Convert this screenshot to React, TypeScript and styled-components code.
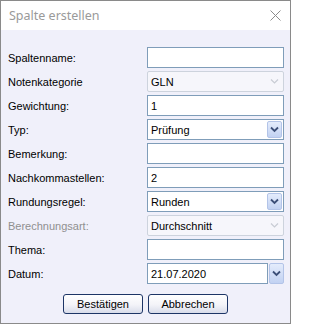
import styled, { createGlobalStyle } from 'styled-components';

const GlobalStyle = createGlobalStyle`
    html, body {
        margin: 0;
        padding: 0;
        background: #ffffff;
    }
    body {
        font-family: "Liberation Sans", Arial, sans-serif;
    }
`;

const Window = styled.div`
    width: 291px;
    height: 324px;
    box-sizing: border-box;
    border: 1px solid #8a8a8a;
    background: #f0f0fa;
    display: flex;
    flex-direction: column;
`;

const TitleBar = styled.div`
    height: 29px;
    flex: none;
    background: #ffffff;
    display: flex;
    align-items: center;
    justify-content: space-between;
    padding: 0 9px 0 8px;
    font-family: "Noto Sans", "Open Sans", sans-serif;
    font-size: 12.5px;
    color: #9a9a9a;
`;

const CloseIcon = styled.svg`
    width: 11px;
    height: 11px;
    display: block;
`;

const Form = styled.div`
    display: grid;
    grid-template-columns: 139px 137px;
    grid-auto-rows: 21px;
    row-gap: 3px;
    align-items: center;
    padding: 17px 6px 0 7px;
`;

const Label = styled.label<{ $disabled?: boolean }>`
    font-size: 11px;
    color: ${({ $disabled }) => ($disabled ? '#8f8f8f' : '#000000')};
`;

const TextBox = styled.input`
    box-sizing: border-box;
    width: 100%;
    height: 21px;
    margin: 0;
    border: 1px solid #7f9db9;
    background: #ffffff;
    padding: 0 3px;
    font-family: "Liberation Sans", Arial, sans-serif;
    font-size: 11px;
    color: #000000;
    outline: none;
`;

const Combo = styled.div<{ $disabled?: boolean }>`
    box-sizing: border-box;
    height: 21px;
    display: flex;
    align-items: center;
    border: 1px solid ${({ $disabled }) => ($disabled ? '#cdd3dd' : '#7f9db9')};
    border-radius: ${({ $disabled }) => ($disabled ? '2px' : '0')};
    background: ${({ $disabled }) => ($disabled ? '#f6f6fb' : '#ffffff')};
    padding: 0 1px 0 3px;
    font-size: 11px;
    color: #000000;
`;

const ComboText = styled.span`
    flex: 1;
`;

const DropButton = styled.div<{ $disabled?: boolean; $tall?: boolean }>`
    box-sizing: border-box;
    width: 15px;
    height: ${({ $tall }) => ($tall ? '21px' : '17px')};
    flex: none;
    display: flex;
    align-items: center;
    justify-content: center;
    border: 1px solid ${({ $disabled }) => ($disabled ? 'transparent' : '#b3c4e8')};
    border-radius: 2px;
    background: ${({ $disabled }) =>
        $disabled ? 'transparent' : 'linear-gradient(#e4ecfc, #c2d2f2)'};
`;

const Chevron = styled.svg`
    width: 9px;
    height: 7px;
    display: block;
`;

const DateField = styled.div`
    display: flex;
    align-items: center;
    gap: 1px;
    height: 21px;
`;

const Buttons = styled.div`
    display: flex;
    justify-content: center;
    gap: 5px;
    margin-top: 10px;
`;

const Button = styled.button`
    box-sizing: border-box;
    width: 80px;
    height: 20px;
    margin: 0;
    padding: 0;
    border: 1px solid #1d3566;
    border-radius: 3px;
    background: linear-gradient(#ffffff, #f3f3f8 55%, #d8dcea);
    font-family: "Liberation Sans", Arial, sans-serif;
    font-size: 11px;
    color: #000000;
`;

const Arrow = ({ disabled }: { disabled?: boolean }) => (
    <Chevron viewBox="0 0 9 7">
        <path
            d="M1 1.5 L4.5 5 L8 1.5"
            fill="none"
            stroke={disabled ? '#c8ccd4' : '#3c4f78'}
            strokeWidth={disabled ? 1.2 : 1.8}
        />
    </Chevron>
);

const Select = ({ value, disabled }: { value: string; disabled?: boolean }) => (
    <Combo $disabled={disabled}>
        <ComboText>{value}</ComboText>
        <DropButton $disabled={disabled}>
            <Arrow disabled={disabled} />
        </DropButton>
    </Combo>
);

const App = () => {
    return (
        <>
            <GlobalStyle />
            <Window>
                <TitleBar>
                    <span>Spalte erstellen</span>
                    <CloseIcon viewBox="0 0 11 11">
                        <path d="M0.5 0.5 L10.5 10.5 M10.5 0.5 L0.5 10.5" stroke="#8c8c8c" strokeWidth="1" />
                    </CloseIcon>
                </TitleBar>
                <Form>
                    <Label>Spaltenname:</Label>
                    <TextBox defaultValue="" />

                    <Label>Notenkategorie</Label>
                    <Select value="GLN" disabled />

                    <Label>Gewichtung:</Label>
                    <TextBox defaultValue="1" />

                    <Label>Typ:</Label>
                    <Select value="Prüfung" />

                    <Label>Bemerkung:</Label>
                    <TextBox defaultValue="" />

                    <Label>Nachkommastellen:</Label>
                    <TextBox defaultValue="2" />

                    <Label>Rundungsregel:</Label>
                    <Select value="Runden" />

                    <Label $disabled>Berechnungsart:</Label>
                    <Select value="Durchschnitt" disabled />

                    <Label>Thema:</Label>
                    <TextBox defaultValue="" />

                    <Label>Datum:</Label>
                    <DateField>
                        <TextBox defaultValue="21.07.2020" />
                        <DropButton $tall>
                            <Arrow />
                        </DropButton>
                    </DateField>
                </Form>
                <Buttons>
                    <Button>Bestätigen</Button>
                    <Button>Abbrechen</Button>
                </Buttons>
            </Window>
        </>
    );
};

export default App;
